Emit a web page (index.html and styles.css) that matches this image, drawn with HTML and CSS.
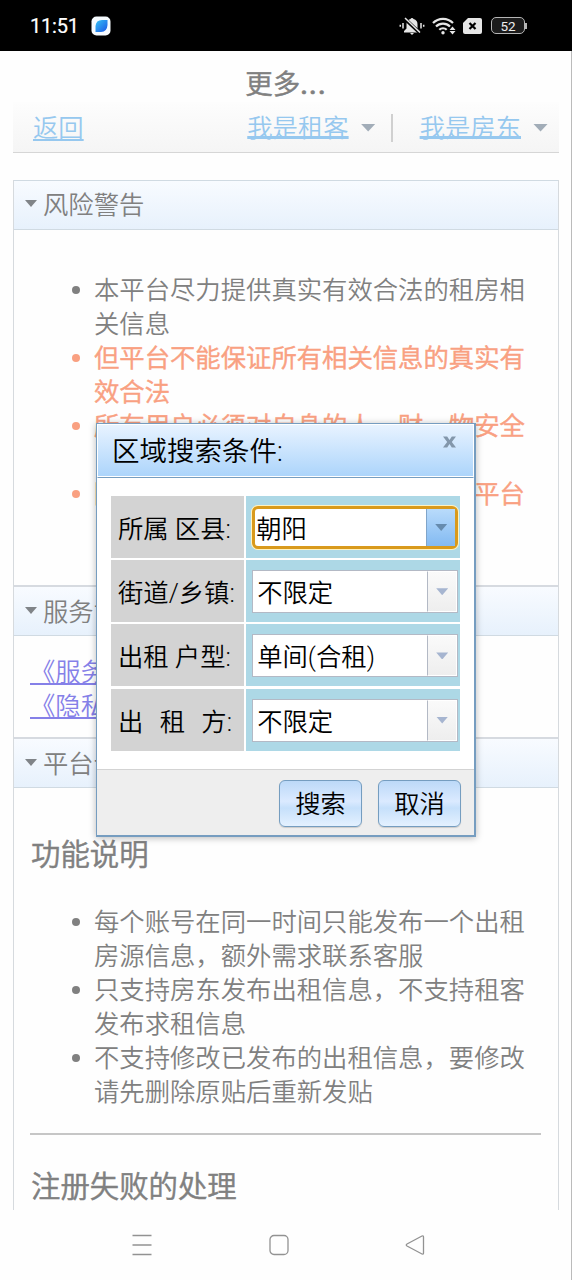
FILE: index.html
```html
<!DOCTYPE html>
<html lang="zh-CN">
<head>
    <meta charset="UTF-8">
    <meta name="viewport" content="width=device-width, initial-scale=1.0">
    <title>更多...</title>
    <link rel="stylesheet" href="styles.css">
</head>
<body>
<div id="page">
    <header class="status">
        <span class="time">11:51</span>
        <svg class="app" width="20" height="20" viewBox="0 0 20 20">
            <defs>
                <linearGradient id="leaf" x1="0" y1="0" x2="1" y2="1">
                    <stop offset="0" stop-color="#35c3f5"/>
                    <stop offset="1" stop-color="#1b55e6"/>
                </linearGradient>
            </defs>
            <rect x=".5" y=".5" width="19" height="19" rx="5" fill="#f6fbff"/>
            <path d="M4.500 16V10Q5 4 11 4H16.500V9Q16 16 10 16Z" fill="url(#leaf)"/>
        </svg>
        <div class="state">
            <svg width="26" height="20" viewBox="0 0 26 20">
                <path d="M5 16.500V15l2.500-2.500V8.500a5.500 5.500 0 0 1 4-5.500 1.600 1.600 0 0 1 3 0 5.500 5.500 0 0 1 4 5.500v4L21 15v1.500z" fill="#e6e6e6"/>
                <path d="M11 17h4l-2 2z" fill="#e6e6e6"/>
                <path d="M5.500 2.500l16 15" stroke="#000" stroke-width="3.500"/>
                <path d="M6 2l15 14.500" stroke="#e6e6e6" stroke-width="1.500"/>
                <path d="M4 7v5.500M1.300 8.800v2M22 7v5.500M24.700 8.800v2" stroke="#e6e6e6" stroke-width="1.500"/>
            </svg>
            <svg width="24" height="20" viewBox="0 0 24 20">
                <g fill="none" stroke="#e6e6e6" stroke-width="2.200">
                    <path d="M1 7a14 14 0 0 1 20 0"/>
                    <path d="M4 10.500a9.800 9.800 0 0 1 14 0"/>
                    <path d="M7.300 13.800a5.200 5.200 0 0 1 7.400 0"/>
                </g>
                <circle cx="11" cy="16.700" r="1.700" fill="#e6e6e6"/>
                <path d="M20.500 10.500l3 3.500h-6zM20.500 18.500l3-3.500h-6z" fill="#e6e6e6"/>
            </svg>
            <svg width="19" height="20" viewBox="0 0 19 20">
                <path d="M5 2h12q2 0 2 2v12q0 2-2 2H2q-2 0-2-2V7z" fill="#e6e6e6"/>
                <path d="M6.500 7l6 6M12.500 7l-6 6" stroke="#000" stroke-width="2.200"/>
            </svg>
            <span class="battery">52</span>
        </div>
    </header>
    <div class="main">
        <h1>更多<span class="dots">...</span></h1>
        <nav class="bar">
            <a class="back" href="#">返回</a>
            <a href="#">我是租客</a><i class="arrow"></i>
            <i class="line"></i>
            <a href="#">我是房东</a><i class="arrow"></i>
        </nav>
        <div class="panels">
            <section>
                <h2><i class="arrow"></i>风险警告</h2>
                <div class="cont warn">
                    <ul>
                        <li>本平台尽力提供真实有效合法的租房相关信息</li>
                        <li class="red">但平台不能保证所有相关信息的真实有效合法</li>
                        <li class="red">所有用户必须对自身的人、财、物安全自负</li>
                        <li class="red">因未遵守提示所造成的损失请勿向平台申诉</li>
                    </ul>
                </div>
            </section>
            <section>
                <h2><i class="arrow"></i>服务协议</h2>
                <div class="cont links">
                    <a href="#">《服务协议》</a>
                    <a href="#">《隐私政策》</a>
                </div>
            </section>
            <section>
                <h2><i class="arrow"></i>平台说明</h2>
                <div class="cont help">
                    <h3>功能说明</h3>
                    <ul>
                        <li>每个账号在同一时间只能发布一个出租房源信息，额外需求联系客服</li>
                        <li>只支持房东发布出租信息，不支持租客发布求租信息</li>
                        <li>不支持修改已发布的出租信息，要修改请先删除原贴后重新发贴</li>
                    </ul>
                    <hr>
                    <h3>注册失败的处理</h3>
                </div>
            </section>
        </div>
    </div>
    <footer class="sysnav">
        <svg width="20" height="22" viewBox="0 0 20 22"><path d="M.5 1.500h19M.5 11h19M.5 20.500h19"/></svg>
        <svg width="20" height="22" viewBox="0 0 20 22"><rect x="1" y="1.500" width="18" height="19" rx="4"/></svg>
        <svg width="20" height="22" viewBox="0 0 20 22"><path d="M17 2L2 10q-1.500 1 0 2l15 8q1.500.5 1.500-1V3q0-1.500-1.500-1z"/></svg>
    </footer>

    <!-- 搜索弹窗 -->
    <div class="dialog">
        <div class="head">
            <span>区域搜索条件:</span>
            <svg width="13" height="12" viewBox="0 0 14 12"><path d="M0 0h4.500L7 3.800 9.500 0H14L9.500 6l4.500 6H9.500L7 8.200 4.500 12H0l4.500-6z" fill="#8397ab"/></svg>
        </div>
        <div class="form">
            <label>所属 区县:</label>
            <div class="field"><div class="select focus"><span>朝阳</span><b><i class="arrow"></i></b></div></div>
            <label>街道/乡镇:</label>
            <div class="field"><div class="select"><span>不限定</span><b><i class="arrow"></i></b></div></div>
            <label>出租 户型:</label>
            <div class="field"><div class="select"><span>单间(合租)</span><b><i class="arrow"></i></b></div></div>
            <label class="wide"><span>出</span><span>租</span><span>方:</span></label>
            <div class="field"><div class="select"><span>不限定</span><b><i class="arrow"></i></b></div></div>
        </div>
        <div class="foot">
            <button>搜索</button>
            <button>取消</button>
        </div>
    </div>
</div>
</body>
</html>
```
FILE: styles.css
```css
* {
    box-sizing: border-box;
}
body {
    margin: 0;
    background: #fefefe;
    color: #808080;
    font: 25.35px/34px Roboto, "Noto Sans CJK SC", sans-serif;
    font-weight: 350;
}
h1, h2, h3, ul {
    margin: 0;
    padding: 0;
    font-weight: 350;
}
#page {
    position: relative;
    display: flex;
    flex-direction: column;
    width: 572px;
    height: 1280px;
    overflow: hidden;
}
.status {
    flex: none;
    display: flex;
    align-items: center;
    height: 51px;
    padding: 0 47px 0 30px;
    background: #000;
    color: #fff;
}
.time {
    width: 61px;
    font: 400 20px/24px Roboto, sans-serif;
    letter-spacing: -.2px;
    -webkit-text-stroke: .2px;
}
.state {
    display: flex;
    align-items: center;
    gap: 7px;
    margin-left: auto;
}
.battery {
    position: relative;
    width: 34px;
    height: 17px;
    margin-left: 2px;
    border: 1px solid #b5b5b5;
    border-radius: 5px;
    background: #1c1c1c;
    color: #eee;
    font: 400 13.500px/16px Roboto, sans-serif;
    text-align: center;
}
.battery::after {
    content: "";
    position: absolute;
    right: -3px;
    top: 5px;
    width: 2px;
    height: 6px;
    background: #b5b5b5;
}
.main {
    flex: 1;
    min-height: 0;
    padding: 15px 12px 0 13px;
    border-right: 1px solid #bbb;
    overflow: hidden;
}
h1, h3, .red {
    -webkit-text-stroke: .5px;
}
h1 {
    height: 36px;
    font-size: 27.5px;
    line-height: 38px;
    text-align: center;
}
.dots {
    font-weight: 500;
    letter-spacing: 1.200px;
}
.bar {
    display: flex;
    align-items: center;
    height: 51px;
    padding: 1px 11px 0 20px;
    border-bottom: 1px solid #d6d6d6;
    background: linear-gradient(#fdfdfd, #f5f5f5);
}
.bar a {
    color: #96c8ef;
    text-decoration-thickness: 3px;
    text-decoration-skip-ink: none;
    text-underline-offset: -1px;
}
.bar .back {
    margin-right: auto;
    text-decoration-thickness: 2px;
    text-underline-offset: 2px;
}
.arrow {
    display: block;
    width: 15px;
    height: 8px;
    background: #a2adb8;
    clip-path: polygon(0 0, 100% 0, 50% 100%);
}
.bar .arrow {
    margin-left: 12px;
}
.line {
    width: 2px;
    height: 28px;
    margin: 0 27px 0 15px;
    background: #d0d0d0;
}
.panels {
    margin-top: 27px;
    border: 1px solid #d6dade;
    border-width: 0 1px;
}
h2 {
    display: flex;
    align-items: center;
    height: 50px;
    padding-left: 11px;
    border: 1px solid #d0dae2;
    border-width: 1px 0;
    background: linear-gradient(#f8fbff, #e7f1fc);
    font-size: 25.35px;
}
section + section h2 {
    height: 51px;
    padding-top: 2px;
    border-top: 2px solid #d6dae0;
}
h2 .arrow {
    width: 12px;
    height: 7px;
    margin: -3px 6px 0 0;
    background: #808488;
}
.cont {
    padding: 0 17px 0 16px;
}
.warn {
    height: 355px;
    padding-top: 43px;
}
.cont ul {
    padding-left: 64px;
    padding-right: 15px;
    list-style: none;
}
li {
    position: relative;
}
li::before {
    content: "";
    position: absolute;
    left: -22px;
    top: 13px;
    width: 8px;
    height: 8px;
    border-radius: 50%;
    background: currentColor;
}
.red {
    color: #f9a081;
}
.links {
    height: 101px;
    padding-top: 19px;
}
.links a {
    display: table;
    color: #8580e8;
    text-decoration-thickness: 2px;
    text-underline-offset: 2px;
}
h3 {
    padding-left: 1px;
    font-size: 29.4px;
    line-height: 40px;
}
.help {
    padding-top: 47px;
    padding-bottom: 10px;
}
.help ul {
    padding-top: 30px;
}
hr {
    height: 2px;
    margin: 24px 0 32px;
    border: 0;
    background: #c6c6c6;
}
.sysnav {
    flex: none;
    display: flex;
    justify-content: space-between;
    height: 70px;
    padding: 24px 146px 0 132px;
    border-right: 1px solid #bbb;
}
.sysnav svg {
    fill: none;
    stroke: #929292;
    stroke-width: 1.3;
}
/* 弹窗 */
.dialog {
    position: absolute;
    left: 96px;
    top: 423px;
    width: 380px;
    height: 414px;
    border: 1px solid #769dc0;
    border-right-width: 2px;
    border-bottom-width: 2px;
    background: #fff;
    box-shadow: 0 1px 7px rgba(0, 0, 0, .28);
    color: #000;
}
.head {
    display: flex;
    justify-content: space-between;
    height: 54px;
    padding: 10px 17px 0 14px;
    border: 1px solid #fff;
    border-bottom: 1px solid #769dc0;
    background: linear-gradient(#e8f3ff, #abd4fb);
    box-shadow: inset 0 -1px #fff;
    font-size: 27.5px;
}
.head svg {
    margin-top: 1px;
}
.form {
    display: grid;
    grid-template-columns: 133px 214px;
    grid-auto-rows: 62px;
    gap: 2.200px;
    height: 291px;
    padding: 18px 14px 0;
}
.form label {
    display: flex;
    align-items: center;
    padding: 4px 7px 0;
    background: #d3d3d3;
    white-space: pre;
}
.form .wide {
    justify-content: space-between;
    padding-right: 12px;
}
.field {
    padding: 10px 2px 0 6px;
    background: #add8e6;
}
.select {
    display: flex;
    height: 43px;
    border: 1px solid #b3b9c5;
    background: #fff;
}
.select span {
    flex: 1;
    padding: 5px 0 0 4px;
}
.select b {
    display: flex;
    align-items: center;
    justify-content: center;
    width: 30px;
    border: 1px solid #fff;
    border-left-color: #b3b9c5;
    background: linear-gradient(#fafafa, #eee);
}
.select .arrow {
    width: 12px;
    height: 7px;
    background: #a6b5d0;
}
.focus {
    border: 3px solid #d99a1c;
    border-radius: 6px;
    box-shadow: 0 0 0 1px #fff2c0;
}
.focus span {
    padding: 3px 0 0 1px;
}
.focus b {
    width: 29px;
    border: 0;
    border-left: 1px solid #80a5ca;
    background: linear-gradient(#b9dbfb, #83baf2);
}
.focus .arrow {
    background: #668bae;
}
.foot {
    display: flex;
    justify-content: flex-end;
    gap: 16px;
    height: 66px;
    padding: 10px 13px 0;
    border-top: 1px solid #d3d3d3;
    background: #eee;
}
.foot button {
    width: 83px;
    height: 47px;
    padding: 0;
    border: 1.500px solid #759dc0;
    border-radius: 6px;
    background: linear-gradient(#bcd9f8, #dbeaff 45%, #c6e0fb 60%, #e4f1ff);
    box-shadow: 0 1px 1px rgba(0, 0, 0, .15);
    color: #000;
    font: inherit;
}
```
